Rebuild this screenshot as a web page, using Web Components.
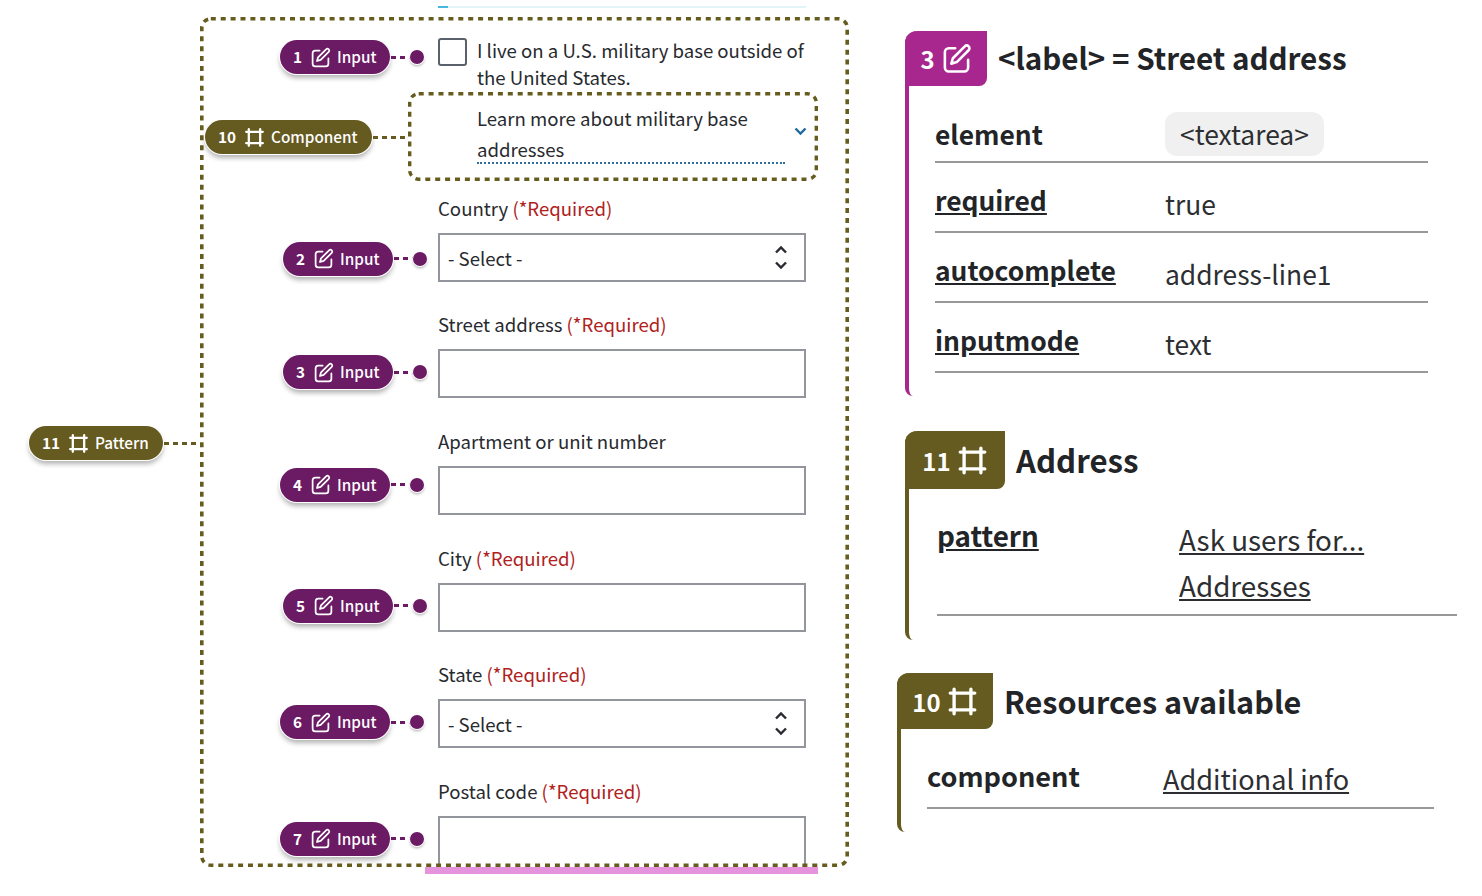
<!DOCTYPE html>
<html lang="en">
<head>
<meta charset="utf-8">
<title>Address form annotations</title>
<style>
  html, body { margin: 0; background: #fff; }
  body { font-family: "Noto Sans CJK SC", "Open Sans", sans-serif; color: #272a2e; }
</style>
</head>
<body>
<anno-page>
  <pattern-box slot="form">
    <anno-tag kind="pattern" n="11" label="Pattern" style="--x:-172px;--y:407px"></anno-tag>

    <check-field>
      <anno-tag n="1" label="Input" dot style="--x:-158px;--y:1px"></anno-tag>
      I live on a U.S. military base outside of the United States.
    </check-field>

    <info-frame>
      <anno-tag kind="pattern" n="10" label="Component" style="--x:-203px;--y:27px"></anno-tag>
      Learn more about military base addresses
    </info-frame>

    <form-field name="Country" required type="select">
      <anno-tag n="2" label="Input" dot style="--x:-155px;--y:8px"></anno-tag>
    </form-field>
    <form-field name="Street address" required>
      <anno-tag n="3" label="Input" dot style="--x:-155px;--y:5px"></anno-tag>
    </form-field>
    <form-field name="Apartment or unit number">
      <anno-tag n="4" label="Input" dot style="--x:-158px;--y:1px"></anno-tag>
    </form-field>
    <form-field name="City" required>
      <anno-tag n="5" label="Input" dot style="--x:-155px;--y:5px"></anno-tag>
    </form-field>
    <form-field name="State" required type="select">
      <anno-tag n="6" label="Input" dot style="--x:-158px;--y:5px"></anno-tag>
    </form-field>
    <form-field name="Postal code" required open>
      <anno-tag n="7" label="Input" dot style="--x:-158px;--y:5px"></anno-tag>
    </form-field>
  </pattern-box>

  <detail-card slot="details" kind="input" n="3" heading="&lt;label&gt; = Street address" style="--tab-w:82px;--tab-h:55px;--top:31px;--end:365px;--h-size:29.6px;--row-top:26px">
    <detail-row key="element" chip>&lt;textarea&gt;</detail-row>
    <detail-row key="required" linked>true</detail-row>
    <detail-row key="autocomplete" linked>address-line1</detail-row>
    <detail-row key="inputmode" linked>text</detail-row>
  </detail-card>

  <detail-card slot="details" kind="pattern" n="11" heading="Address" style="--tab-w:100px;--tab-h:58px;--top:35px;--end:209px;--h-size:31.2px;--row-top:26.5px;--row-x:28px;--row-w:520px;--col:242px;--size:27.8px;--lh:46.6px;--pb:5px;--key-lh:39px">
    <detail-row key="pattern" linked>
      <a href="#">Ask users for...</a><br><a href="#">Addresses</a>
    </detail-row>
  </detail-card>

  <detail-card slot="details" kind="pattern" n="10" heading="Resources available" style="--left:-8px;--tab-w:96px;--tab-h:56px;--top:33px;--end:159px;--h-size:30.6px;--row-top:25.5px;--row-x:26px;--row-w:507px;--col:236px;--size:27.1px;--lh:47px;--pb:5px;--key-lh:41px">
    <detail-row key="component"><a href="#">Additional info</a></detail-row>
  </detail-card>
</anno-page>

<script>
const PENCIL = `<svg viewBox="0 0 24 24" fill="none" stroke="currentColor" stroke-width="2" stroke-linecap="round" stroke-linejoin="round" aria-hidden="true">
  <path d="M11 4H6a3 3 0 0 0-3 3v12a3 3 0 0 0 3 3h12a3 3 0 0 0 3-3v-6"/>
  <path d="M18.4 2.6a2.1 2.1 0 0 1 3 3L12.2 14.8 8 16l1.2-4.2z"/></svg>`;
const FRAME = `<svg viewBox="0 0 24 24" fill="none" stroke="currentColor" stroke-width="2.6" stroke-linecap="round" aria-hidden="true">
  <path d="M2.5 5.5h19M2.5 18.5h19M5.5 2.5v19M18.5 2.5v19"/></svg>`;
const COLORS = { input: "#6b1a64", pattern: "#655a1f" };

class AnnoPage extends HTMLElement {
  constructor() {
    super();
    this.attachShadow({ mode: "open" });
    this.shadowRoot.innerHTML = `
      <style>
        :host { display: flex; align-items: flex-start; padding-left: 201px; height: 896px; box-sizing: border-box; overflow: hidden; }
        .form-col { width: 648px; flex: none; padding-top: 6px; }
        .top-line { height: 2px; width: 368px; margin: 0 0 10px 237px; background: linear-gradient(90deg, #49b8e0 10px, #e1f5f9 10px); }
        .pink-line { height: 7px; width: 393px; margin: 1px 0 0 224px; background: #e493dc; }
        .detail-col { margin-left: 56px; flex: 1; display: flex; flex-direction: column; }
      </style>
      <div class="form-col">
        <div class="top-line"></div>
        <slot name="form"></slot>
        <div class="pink-line"></div>
      </div>
      <div class="detail-col"><slot name="details"></slot></div>
    `;
  }
}

class PatternBox extends HTMLElement {
  constructor() {
    super();
    this.attachShadow({ mode: "open" });
    this.shadowRoot.innerHTML = `
      <style>
        :host { display: block; position: relative; height: 848px; box-sizing: border-box; padding: 20px 43px 0 237px; }
        svg { position: absolute; left: -1px; top: -1px; width: calc(100% + 1px); height: calc(100% + 2px); pointer-events: none; overflow: visible; }
        rect { x: 1.8px; y: 1.8px; width: calc(100% - 3.6px); height: calc(100% - 3.6px); fill: none; stroke: #665c1e; stroke-width: 3.6; stroke-dasharray: 5 4.9; }
      </style>
      <slot></slot>
      <svg aria-hidden="true"><rect rx="9"></rect></svg>
    `;
  }
}

class AnnoTag extends HTMLElement {
  constructor() {
    super();
    this.attachShadow({ mode: "open" });
  }

  connectedCallback() {
    const kind = this.getAttribute("kind") || "input";
    const dot = this.hasAttribute("dot");
    this.shadowRoot.innerHTML = `
      <style>
        :host { position: absolute; left: var(--x); top: var(--y); display: flex; align-items: center; height: 36px; color: ${COLORS[kind]}; z-index: 2; }
        .pill { display: flex; align-items: center; height: 34px; padding: 0 14px 0 13px; border-radius: 18px; background: currentColor; box-shadow: 0 0 0 1px #fff, 0 4px 5px rgba(0,0,0,.3); font: 500 15.3px/32px "Noto Sans CJK SC", "Open Sans", sans-serif; white-space: nowrap; }
        .pill span { color: #fff; margin-top: -2px; }
        .n { font-weight: 700; }
        .pill svg { width: 21px; height: 21px; margin: 2px 6px 0 8px; color: #fff; }
        .line { height: 3px; width: ${dot ? 19 : 35}px; margin-left: 1px; background: repeating-linear-gradient(90deg, currentColor 0 5px, transparent 5px 9px); }
        .dot { width: 14px; height: 14px; border-radius: 50%; background: currentColor; box-shadow: 0 0 0 1px #fff, 0 2px 3px rgba(0,0,0,.35); }
      </style>
      <div class="pill"><span class="n">${this.getAttribute("n")}</span><span style="display:flex">${kind === "input" ? PENCIL : FRAME}</span><span>${this.getAttribute("label")}</span></div>
      <div class="line"></div>
      ${dot ? '<div class="dot"></div>' : ""}
    `;
  }
}

class CheckField extends HTMLElement {
  constructor() {
    super();
    this.attachShadow({ mode: "open" });
    this.shadowRoot.innerHTML = `
      <style>
        :host { display: flex; gap: 10px; position: relative; font-size: 18.6px; line-height: 27px; height: 54px; }
        .box { flex: none; width: 29px; height: 28px; box-sizing: border-box; border: 2px solid #5b616b; border-radius: 3px; background: #fff; }
        .text { width: 332px; margin-top: -2px; }
      </style>
      <div class="box"></div>
      <div class="text"><slot></slot></div>
    `;
  }
}

class InfoFrame extends HTMLElement {
  constructor() {
    super();
    this.attachShadow({ mode: "open" });
    this.shadowRoot.innerHTML = `
      <style>
        :host { display: block; position: relative; width: 410px; height: 88px; box-sizing: border-box; margin: 0 0 12.6px -30px; padding: 10px 0 0 69px; font-size: 18.6px; line-height: 31px; }
        .trigger { display: flex; align-items: center; gap: 9px; }
        .text { width: 308px; height: 60px; border-bottom: 2px dotted #2f6f9e; }
        .chev { width: 13px; height: 9px; color: #1f6a9c; margin-top: -3px; }
        .frame { position: absolute; inset: 0; width: 100%; height: calc(100% + 1px); overflow: visible; pointer-events: none; }
        rect { x: 1.7px; y: 1.7px; width: calc(100% - 3.4px); height: calc(100% - 3.4px); fill: none; stroke: #665c1e; stroke-width: 3.4; stroke-dasharray: 5 4.9; }
      </style>
      <div class="trigger">
        <div class="text"><slot></slot></div>
        <svg class="chev" viewBox="0 0 13 9" fill="none" stroke="currentColor" stroke-width="2.4"><path d="M1.5 1.5l5 5 5-5"/></svg>
      </div>
      <svg class="frame" aria-hidden="true"><rect rx="9"></rect></svg>
    `;
  }
}

class FormField extends HTMLElement {
  constructor() {
    super();
    this.attachShadow({ mode: "open" });
  }

  connectedCallback() {
    const isSelect = this.getAttribute("type") === "select";
    this.shadowRoot.innerHTML = `
      <style>
        :host { display: block; margin-bottom: 27.67px; font-size: 18.6px; }
        label { display: block; height: 30px; line-height: 29px; margin-bottom: 10px; }
        .req { color: #b0211c; }
        .wrap { position: relative; }
        .control { display: flex; align-items: center; justify-content: space-between; box-sizing: border-box; height: 49px; width: 100%; padding: 0 16px 0 8px; border: 2px solid #92959b; background: #fff; border-radius: 0; font: inherit; color: inherit; margin: 0; }
        :host([open]) .control { border-bottom: 0; }
        svg { width: 14px; height: 25px; color: #272a2e; }
      </style>
      <label>${this.getAttribute("name")}${this.hasAttribute("required") ? ' <span class="req">(*Required)</span>' : ""}</label>
      <div class="wrap">
        <slot></slot>
        ${isSelect
          ? `<div class="control"><span>- Select -</span><svg viewBox="0 0 14 25" fill="none" stroke="currentColor" stroke-width="2.4"><path d="M2 7.5l5-5 5 5M2 17.5l5 5 5-5"/></svg></div>`
          : `<input class="control" type="text" aria-label="${this.getAttribute("name")}">`}
      </div>
    `;
  }
}

class DetailCard extends HTMLElement {
  constructor() {
    super();
    this.attachShadow({ mode: "open" });
  }

  connectedCallback() {
    const kind = this.getAttribute("kind");
    const color = kind === "input" ? "#a8278f" : COLORS.pattern;
    this.shadowRoot.innerHTML = `
      <style>
        :host { display: block; position: relative; box-sizing: border-box; height: var(--end); margin: var(--top) 0 0 var(--left, 0); border-left: 4px solid ${color}; border-radius: 12px 0 0 8px; }
        .head { display: flex; align-items: center; gap: 11px; margin-left: -4px; height: var(--tab-h); }
        .tab { display: flex; align-items: center; justify-content: center; gap: 6px; box-sizing: border-box; width: var(--tab-w); height: 100%; background: ${color}; color: #fff; border-radius: 12px 0 8px 0; font-weight: 700; font-size: 24px; }
        .tab svg { width: 31px; height: 31px; }
        h2 { margin: -1px 0 0; font-size: var(--h-size); line-height: 40px; font-weight: 700; color: #222427; white-space: nowrap; }
        .rows { margin: var(--row-top) 0 0 var(--row-x, 26px); width: var(--row-w, 493px); --col-w: var(--col, 230px); }
      </style>
      <div class="head">
        <div class="tab"><span>${this.getAttribute("n")}</span>${kind === "input" ? PENCIL : FRAME}</div>
        <h2></h2>
      </div>
      <div class="rows"><slot></slot></div>
    `;
    this.shadowRoot.querySelector("h2").textContent = this.getAttribute("heading");
  }
}

class DetailRow extends HTMLElement {
  constructor() {
    super();
    this.attachShadow({ mode: "open" });
  }

  connectedCallback() {
    const key = this.getAttribute("key");
    this.shadowRoot.innerHTML = `
      <style>
        :host { display: grid; grid-template-columns: var(--col-w) 1fr; border-bottom: 2px solid #96989a; padding-bottom: var(--pb, 5px); margin-bottom: 19px; font-size: var(--size, 26.4px); line-height: var(--lh, 44px); color: #2c2e31; }
        .key { font-weight: 700; color: #222427; line-height: var(--key-lh, 36px); }
        :host([chip]) .key { line-height: 44px; }
        .key a { color: inherit; }
        .chip { display: block; width: fit-content; padding: 0 15px; height: 44px; line-height: 44px; background: #f0f0f0; border-radius: 12px; }
        ::slotted(a) { color: #2c2e31; }
      </style>
      <div class="key">${this.hasAttribute("linked") ? `<a href="#">${key}</a>` : key}</div>
      <div>${this.hasAttribute("chip") ? '<span class="chip"><slot></slot></span>' : "<slot></slot>"}</div>
    `;
  }
}

customElements.define("anno-page", AnnoPage);
customElements.define("pattern-box", PatternBox);
customElements.define("anno-tag", AnnoTag);
customElements.define("check-field", CheckField);
customElements.define("info-frame", InfoFrame);
customElements.define("form-field", FormField);
customElements.define("detail-card", DetailCard);
customElements.define("detail-row", DetailRow);
</script>
</body>
</html>
